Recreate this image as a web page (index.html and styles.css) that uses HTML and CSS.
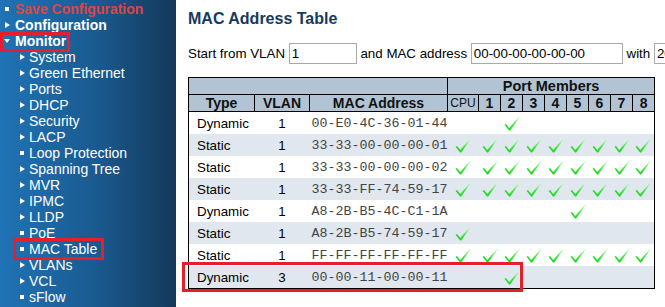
FILE: index.html
```html
<!DOCTYPE html>
<html lang="en">
<head>
    <meta charset="UTF-8">
    <title>MAC Address Table</title>
    <link rel="stylesheet" href="styles.css">
</head>
<body>
    <svg class="defs" width="0" height="0">
        <defs>
            <linearGradient id="okfill" x1="0" y1="1" x2="1" y2="0">
                <stop offset="0" stop-color="#12d012"/>
                <stop offset="0.5" stop-color="#3ee83e"/>
                <stop offset="1" stop-color="#d8fbd8"/>
            </linearGradient>
            <symbol id="ok" viewBox="0 0 16 15">
                <path d="M0.5 8.8 L2.0 8.0 L5.2 12.0 L15.3 0.4 L15.8 0.9 L6.2 14.6 L5.0 14.6 Z" fill="url(#okfill)"/>
            </symbol>
        </defs>
    </svg>

    <div class="page">
        <div class="sidebar">
            <ul class="nav">
                <li class="top save"><span class="ico sq"></span>Save Configuration</li>
                <li class="top"><span class="ico tri"></span>Configuration</li>
                <li class="top"><span class="ico down"></span>Monitor</li>
                <li class="sub"><span class="ico tri"></span>System</li>
                <li class="sub"><span class="ico tri"></span>Green Ethernet</li>
                <li class="sub"><span class="ico tri"></span>Ports</li>
                <li class="sub"><span class="ico tri"></span>DHCP</li>
                <li class="sub"><span class="ico tri"></span>Security</li>
                <li class="sub"><span class="ico tri"></span>LACP</li>
                <li class="sub"><span class="ico sq"></span>Loop Protection</li>
                <li class="sub"><span class="ico tri"></span>Spanning Tree</li>
                <li class="sub"><span class="ico tri"></span>MVR</li>
                <li class="sub"><span class="ico tri"></span>IPMC</li>
                <li class="sub"><span class="ico tri"></span>LLDP</li>
                <li class="sub"><span class="ico sq"></span>PoE</li>
                <li class="sub"><span class="ico sq"></span>MAC Table</li>
                <li class="sub"><span class="ico tri"></span>VLANs</li>
                <li class="sub"><span class="ico tri"></span>VCL</li>
                <li class="sub"><span class="ico sq"></span>sFlow</li>
            </ul>
        </div>

        <div class="main">
            <h1>MAC Address Table</h1>
            <div class="filter">
                Start from VLAN <input class="in-vlan" type="text" value="1">
                and MAC address <input class="in-mac" type="text" value="00-00-00-00-00-00">
                with <input class="in-count" type="text" value="20">
            </div>

            <table class="mactable">
                <colgroup>
                    <col class="c-type"><col class="c-vlan"><col class="c-mac">
                    <col class="c-cpu">
                    <col class="c-port"><col class="c-port"><col class="c-port"><col class="c-port">
                    <col class="c-port"><col class="c-port"><col class="c-port"><col class="c-port">
                </colgroup>
                <thead>
                    <tr>
                        <th colspan="3"></th>
                        <th colspan="9" class="members">Port Members</th>
                    </tr>
                    <tr>
                        <th>Type</th>
                        <th>VLAN</th>
                        <th>MAC Address</th>
                        <th class="cpu">CPU</th>
                        <th>1</th><th>2</th><th>3</th><th>4</th>
                        <th>5</th><th>6</th><th>7</th><th>8</th>
                    </tr>
                </thead>
                <tbody>
                    <tr>
                        <td class="type">Dynamic</td><td class="vlan">1</td><td class="mac">00-E0-4C-36-01-44</td>
                        <td></td><td></td>
                        <td><svg class="chk"><use href="#ok"/></svg></td>
                        <td></td><td></td><td></td><td></td><td></td><td></td>
                    </tr>
                    <tr class="alt">
                        <td class="type">Static</td><td class="vlan">1</td><td class="mac">33-33-00-00-00-01</td>
                        <td><svg class="chk"><use href="#ok"/></svg></td>
                        <td><svg class="chk"><use href="#ok"/></svg></td>
                        <td><svg class="chk"><use href="#ok"/></svg></td>
                        <td><svg class="chk"><use href="#ok"/></svg></td>
                        <td><svg class="chk"><use href="#ok"/></svg></td>
                        <td><svg class="chk"><use href="#ok"/></svg></td>
                        <td><svg class="chk"><use href="#ok"/></svg></td>
                        <td><svg class="chk"><use href="#ok"/></svg></td>
                        <td><svg class="chk"><use href="#ok"/></svg></td>
                    </tr>
                    <tr>
                        <td class="type">Static</td><td class="vlan">1</td><td class="mac">33-33-00-00-00-02</td>
                        <td><svg class="chk"><use href="#ok"/></svg></td>
                        <td><svg class="chk"><use href="#ok"/></svg></td>
                        <td><svg class="chk"><use href="#ok"/></svg></td>
                        <td><svg class="chk"><use href="#ok"/></svg></td>
                        <td><svg class="chk"><use href="#ok"/></svg></td>
                        <td><svg class="chk"><use href="#ok"/></svg></td>
                        <td><svg class="chk"><use href="#ok"/></svg></td>
                        <td><svg class="chk"><use href="#ok"/></svg></td>
                        <td><svg class="chk"><use href="#ok"/></svg></td>
                    </tr>
                    <tr class="alt">
                        <td class="type">Static</td><td class="vlan">1</td><td class="mac">33-33-FF-74-59-17</td>
                        <td><svg class="chk"><use href="#ok"/></svg></td>
                        <td><svg class="chk"><use href="#ok"/></svg></td>
                        <td><svg class="chk"><use href="#ok"/></svg></td>
                        <td><svg class="chk"><use href="#ok"/></svg></td>
                        <td><svg class="chk"><use href="#ok"/></svg></td>
                        <td><svg class="chk"><use href="#ok"/></svg></td>
                        <td><svg class="chk"><use href="#ok"/></svg></td>
                        <td><svg class="chk"><use href="#ok"/></svg></td>
                        <td><svg class="chk"><use href="#ok"/></svg></td>
                    </tr>
                    <tr>
                        <td class="type">Dynamic</td><td class="vlan">1</td><td class="mac">A8-2B-B5-4C-C1-1A</td>
                        <td></td><td></td><td></td><td></td><td></td>
                        <td><svg class="chk"><use href="#ok"/></svg></td>
                        <td></td><td></td><td></td>
                    </tr>
                    <tr class="alt">
                        <td class="type">Static</td><td class="vlan">1</td><td class="mac">A8-2B-B5-74-59-17</td>
                        <td><svg class="chk"><use href="#ok"/></svg></td>
                        <td></td><td></td><td></td><td></td><td></td><td></td><td></td><td></td>
                    </tr>
                    <tr>
                        <td class="type">Static</td><td class="vlan">1</td><td class="mac">FF-FF-FF-FF-FF-FF</td>
                        <td><svg class="chk"><use href="#ok"/></svg></td>
                        <td><svg class="chk"><use href="#ok"/></svg></td>
                        <td><svg class="chk"><use href="#ok"/></svg></td>
                        <td><svg class="chk"><use href="#ok"/></svg></td>
                        <td><svg class="chk"><use href="#ok"/></svg></td>
                        <td><svg class="chk"><use href="#ok"/></svg></td>
                        <td><svg class="chk"><use href="#ok"/></svg></td>
                        <td><svg class="chk"><use href="#ok"/></svg></td>
                        <td><svg class="chk"><use href="#ok"/></svg></td>
                    </tr>
                    <tr class="alt">
                        <td class="type">Dynamic</td><td class="vlan">3</td><td class="mac">00-00-11-00-00-11</td>
                        <td></td><td></td>
                        <td><svg class="chk"><use href="#ok"/></svg></td>
                        <td></td><td></td><td></td><td></td><td></td><td></td>
                    </tr>
                </tbody>
            </table>
        </div>
    </div>

    <!-- red highlight boxes drawn over the screenshot -->
    <div class="mark mark-monitor"></div>
    <div class="mark mark-mactable"></div>
    <div class="mark mark-row"></div>
</body>
</html>
```

FILE: styles.css
```css
html, body {
    margin: 0;
    padding: 0;
    height: 100%;
    overflow: hidden;
}
body {
    font-family: 'Liberation Sans', Arial, sans-serif;
    font-size: 13.33px;
    color: #000;
    background-color: #fff;
    position: relative;
}
.defs {
    position: absolute;
    width: 0;
    height: 0;
}
.page {
    display: flex;
    height: 100%;
}

/* left menu */
.sidebar {
    width: 176px;
    flex: none;
    background: linear-gradient(to right, #2073b6 0%, #1a5a8f 55%, #14385a 100%);
    color: #fff;
    font-size: 14px;
}
.nav {
    list-style: none;
    margin: 0;
    padding: 1px 0 0 0;
}
.nav li {
    display: flex;
    align-items: center;
    height: 16px;
    line-height: 16px;
    white-space: nowrap;
}
.nav li.top {
    font-weight: bold;
    padding-left: 5px;
}
.nav li.sub {
    padding-left: 20px;
}
.nav li.save {
    color: #de4545;
}
.ico {
    flex: none;
    width: 10px;
    display: flex;
    align-items: center;
}
.sub .ico {
    width: 9px;
}
.ico.sq::before {
    content: "";
    width: 4px;
    height: 4px;
    margin-top: -1px;
    background-color: #fff;
}
.ico.tri::before {
    content: "";
    border-left: 5px solid #fff;
    border-top: 3.5px solid transparent;
    border-bottom: 3.5px solid transparent;
}
.ico.down::before {
    content: "";
    margin-left: -1px;
    border-top: 4px solid #fff;
    border-left: 3.5px solid transparent;
    border-right: 3.5px solid transparent;
}

/* content */
.main {
    flex: 1;
    min-width: 0;
    padding-left: 12px;
    white-space: nowrap;
}
h1 {
    margin: 0;
    padding-top: 10px;
    font-size: 16px;
    line-height: 18px;
    font-weight: bold;
    color: #183a5c;
}
.filter {
    margin-top: 15px;
    height: 21px;
    line-height: 21px;
}
.filter input {
    box-sizing: border-box;
    height: 21px;
    font-family: 'Liberation Sans', Arial, sans-serif;
    font-size: 13.33px;
    border: 1px solid #a9a9a9;
    padding: 0 2px;
    margin: 0;
    vertical-align: top;
    color: #000;
}
.in-vlan { width: 68px; }
.in-mac { width: 152px; }
.in-count { width: 60px; }

.mactable {
    margin-top: 13px;
    border-collapse: collapse;
    table-layout: fixed;
    width: 467px;
    border: 1px solid #000;
}
.c-type { width: 66px; }
.c-vlan { width: 55px; }
.c-mac { width: 138px; }
.c-cpu { width: 31px; }
.c-port { width: 22px; }

.mactable th {
    background-color: #b2c4d4;
    border: 1px solid #000;
    height: 16px;
    padding: 0;
    font-size: 14px;
    line-height: 16px;
    font-weight: bold;
    color: #111;
    text-align: center;
}
.mactable th.members {
    font-size: 14.5px;
}
.mactable th.cpu {
    font-weight: normal;
    font-size: 12px;
}
.mactable td {
    height: 22px;
    padding: 0;
    text-align: center;
    vertical-align: middle;
}
.mactable tr.alt td {
    background-color: #e0e7ee;
}
.mactable td.type {
    text-align: left;
    padding-left: 8px;
}
.mactable td.mac {
    text-align: left;
    padding-left: 2px;
    font-family: 'Liberation Mono', 'Courier New', monospace;
    font-size: 13.33px;
    color: #444;
}
.chk {
    display: block;
    width: 16px;
    height: 15px;
    margin: 0 auto;
}

/* red annotation boxes */
.mark {
    position: absolute;
    border: 3px solid #e5202a;
    box-sizing: border-box;
}
.mark-monitor {
    left: 0;
    top: 32px;
    width: 70px;
    height: 20px;
}
.mark-mactable {
    left: 13px;
    top: 238px;
    width: 91px;
    height: 22px;
}
.mark-row {
    left: 182px;
    top: 262px;
    width: 341px;
    height: 30px;
}
```
